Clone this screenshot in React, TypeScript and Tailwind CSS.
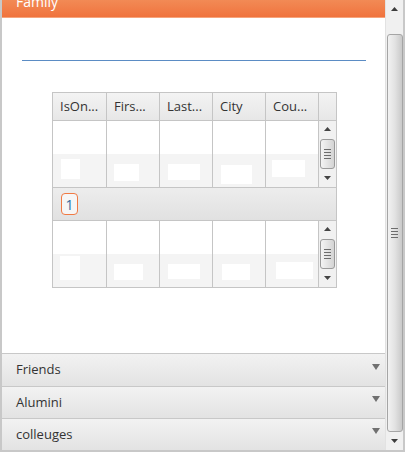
import type { ReactNode } from 'react';

const font = "font-['Open_Sans','Liberation_Sans',sans-serif]";

const Arrow = ({ dir, big, className = '' }: { dir: 'up' | 'down'; big?: boolean; className?: string }) => {
  const w = big ? 8 : 7;
  const h = big ? 6 : 4;
  return (
    <svg width={w} height={h} viewBox={`0 0 ${w} ${h}`} className={className}>
      {dir === 'up' ? (
        <polygon points={`0,${h} ${w},${h} ${w / 2},0`} fill="currentColor" />
      ) : (
        <polygon points={`0,0 ${w},0 ${w / 2},${h}`} fill="currentColor" />
      )}
    </svg>
  );
};

const Grip = () => (
  <div className="flex flex-col gap-[2px]">
    <div className="h-px w-[7px] bg-[#6d6d6d]" />
    <div className="h-px w-[7px] bg-[#6d6d6d]" />
    <div className="h-px w-[7px] bg-[#6d6d6d]" />
    <div className="h-px w-[7px] bg-[#6d6d6d]" />
  </div>
);

// small scrollbar used inside each block of grid rows
const RowScroll = () => (
  <div className="flex w-[17px] flex-col items-center bg-[#f1f1f1]">
    <div className="flex h-[16px] items-center justify-center text-[#444]">
      <Arrow dir="up" />
    </div>
    <div className="mt-[2px] flex h-[30px] w-[15px] items-center justify-center rounded-[3px] border border-[#9a9a9a] bg-gradient-to-r from-[#f4f4f4] to-[#d4d4d4]">
      <Grip />
    </div>
    <div className="flex flex-1 items-center justify-center text-[#444]">
      <Arrow dir="down" />
    </div>
  </div>
);

const colW = ['w-[54px]', 'w-[53px]', 'w-[53px]', 'w-[53px]', 'w-[53px]'];

const Cell = ({ i, children }: { i: number; children?: ReactNode }) => (
  <div className={`relative h-full ${colW[i]} border-r border-[#c5c5c5]`}>{children}</div>
);

const Blank = ({ x, y, w, h }: { x: number; y: number; w: number; h: number }) => (
  <span className="absolute bg-white" style={{ left: x, top: y, width: w, height: h }} />
);

const RowBlock = ({ blanks }: { blanks: { x: number; y: number; w: number; h: number }[] }) => (
  <div className="flex h-[66px]">
    <div className="flex flex-col">
      <div className="flex h-[33px]">
        {[0, 1, 2, 3, 4].map((i) => (
          <Cell key={i} i={i} />
        ))}
      </div>
      <div className="flex h-[33px] bg-[#f4f4f4]">
        {[0, 1, 2, 3, 4].map((i) => (
          <Cell key={i} i={i}>
            <Blank {...blanks[i]} />
          </Cell>
        ))}
      </div>
    </div>
    <RowScroll />
  </div>
);

const headers = ['IsOn...', 'Firs...', 'Last...', 'City', 'Cou...'];

const FriendsGrid = () => (
  <div className={`ml-[50px] mt-[31px] w-[285px] border border-[#c5c5c5] text-[13px] text-[#333] ${font}`}>
    <div className="flex h-[28px] border-b border-[#c5c5c5] bg-gradient-to-b from-[#f3f3f3] to-[#e7e7e7]">
      {headers.map((h, i) => (
        <div key={h} className={`flex ${colW[i]} items-center border-r border-[#c5c5c5] pl-[7px]`}>
          {h}
        </div>
      ))}
      <div className="w-[17px]" />
    </div>
    <RowBlock
      blanks={[
        { x: 8, y: 5, w: 19, h: 20 },
        { x: 7, y: 10, w: 25, h: 17 },
        { x: 8, y: 10, w: 32, h: 16 },
        { x: 8, y: 11, w: 31, h: 19 },
        { x: 6, y: 6, w: 33, h: 17 },
      ]}
    />
    <div className="flex h-[34px] items-center border-y border-[#c5c5c5] bg-gradient-to-b from-[#ededed] to-[#e1e1e1] pl-[8px]">
      <span className="flex h-[22px] w-[17px] items-center justify-center rounded-[4px] border border-[#f07a44] bg-[#f6f6f6] text-[14px] text-[#2f6c9e]">
        1
      </span>
    </div>
    <RowBlock
      blanks={[
        { x: 7, y: 2, w: 20, h: 24 },
        { x: 7, y: 10, w: 29, h: 16 },
        { x: 8, y: 10, w: 32, h: 15 },
        { x: 9, y: 10, w: 28, h: 16 },
        { x: 10, y: 8, w: 37, h: 17 },
      ]}
    />
  </div>
);

const Panel = ({ title, h }: { title: string; h: string }) => (
  <div className={`flex ${h} items-center justify-between border-t border-[#c8c8c8] bg-gradient-to-b from-[#f2f2f2] to-[#e3e3e3] pl-[14px] pr-[5px] text-[13px] text-[#333] ${font}`}>
    <span>{title}</span>
    <Arrow dir="down" big className="mb-[7px] text-[#707070]" />
  </div>
);

export default function App() {
  return (
    <div className="flex h-[452px] w-[405px] border-x-2 border-b-2 border-[#c8c8c8] bg-white">
      <div className="flex w-[383px] flex-col">
        {/* open panel header, scrolled past its top */}
        <div className="h-[18px] overflow-hidden border-b border-[#f6a47c] bg-gradient-to-b from-[#f28a55] to-[#f0733d]">
          <div className={`-mt-[8px] pl-[14px] text-[14px] leading-[20px] text-white ${font}`}>Family</div>
        </div>
        <div className="flex-1">
          <div className="ml-[20px] mt-[42px] h-px w-[344px] bg-[#5b8cc4]" />
          <FriendsGrid />
        </div>
        <Panel title="Friends" h="h-[33px]" />
        <Panel title="Alumini" h="h-[32px]" />
        <Panel title="colleuges" h="h-[32px]" />
      </div>
      {/* page scrollbar */}
      <div className="flex w-[18px] flex-col items-center border-l border-[#e2e2e2] bg-[#f0f0f0]">
        <div className="flex h-[17px] items-center justify-center text-[#3c3c3c]">
          <Arrow dir="up" />
        </div>
        <div className="mt-[17px] flex h-[398px] w-[16px] items-center justify-center rounded-[3px] border border-[#a5a5a5] bg-gradient-to-r from-[#f2f2f2] via-[#e2e2e2] to-[#c9c9c9]">
          <Grip />
        </div>
        <div className="flex flex-1 items-center justify-center text-[#3c3c3c]">
          <Arrow dir="down" />
        </div>
      </div>
    </div>
  );
}
